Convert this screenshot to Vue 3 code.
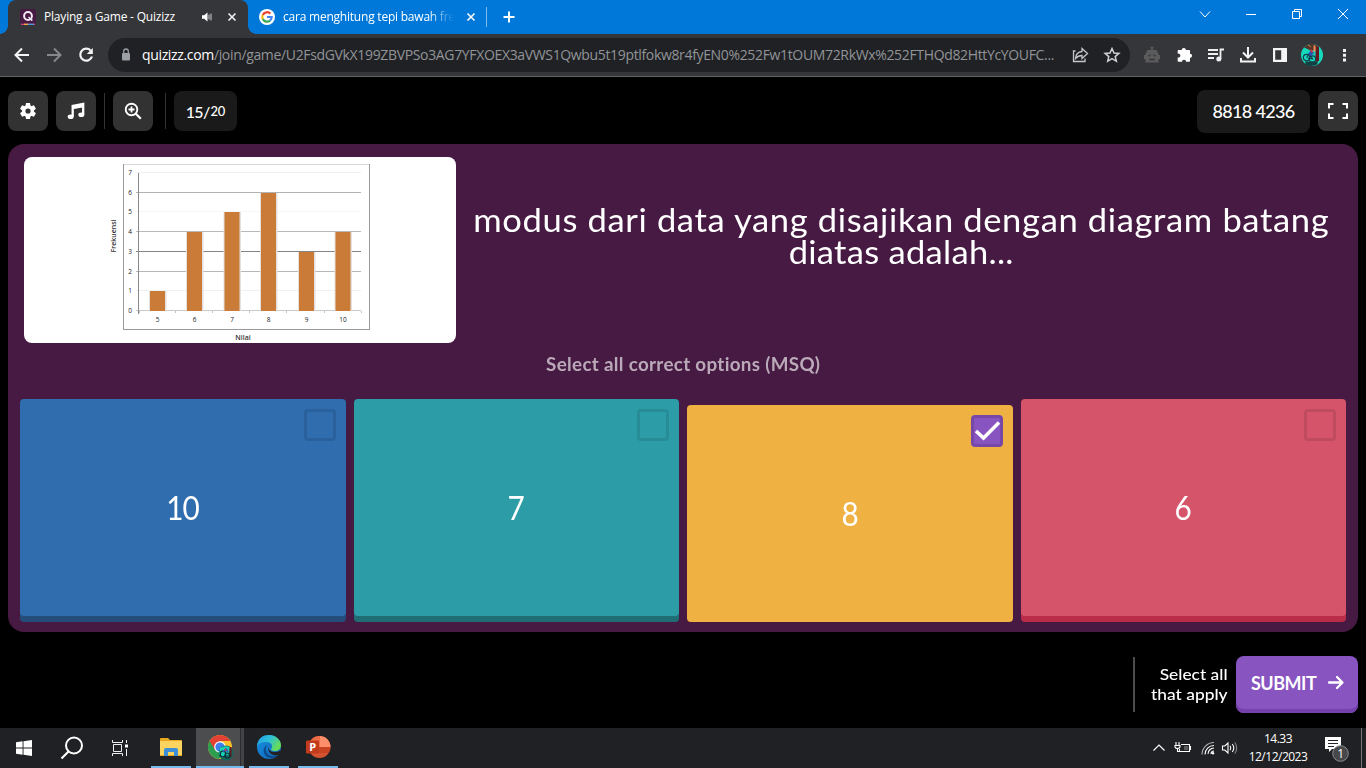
<script setup>
const answers = [
  { label: '10', color: 'blue', picked: false },
  { label: '7', color: 'teal', picked: false },
  { label: '8', color: 'yellow', picked: true },
  { label: '6', color: 'red', picked: false },
]

const bars = [
  { name: '5', x: 126, value: 1 },
  { name: '6', x: 163, value: 4 },
  { name: '7', x: 200.5, value: 5 },
  { name: '8', x: 237, value: 6 },
  { name: '9', x: 275, value: 3 },
  { name: '10', x: 311.5, value: 4 },
]
const gridTone = ['#c9c9c9', '#f0f0f0', '#b7b7b7', '#848484', '#b9b9b9', '#f6f6f6', '#b2b2b2', '#f0f0f0']
const grid = gridTone.map((tone, value) => ({ tone, value, y: 153.5 - Math.round(value * 19.72) }))
const ticks = [115.5, 151.5, 188.5, 225.5, 262.5, 300.5, 337.5]
const topOf = (v) => 154 - Math.round(v * 19.72)
</script>

<template>
  <div class="screen">
    <header class="tabs">
      <div class="tab active">
        <svg class="fav" width="16" height="16" viewBox="0 0 16 16">
          <rect x="0" y="0" width="16" height="15" rx="2.5" fill="#461a42" />
          <path d="M1 15.300h14" stroke="#e8457c" stroke-width="1.2" />
          <path d="M4 15.300h4" stroke="#f5b73e" stroke-width="1.2" />
          <path d="M8 15.300h6" stroke="#3aa0e8" stroke-width="1.2" />
          <circle cx="8" cy="7" r="3.9" fill="none" stroke="#f3e8f4" stroke-width="2" />
          <path d="M8.500 8l2 2" stroke="#f3e8f4" stroke-width="1.500" />
          <circle cx="11.600" cy="11" r="1" fill="#f3e8f4" />
        </svg>
        <span class="title first">Playing a Game - Quizizz</span>
        <svg class="speaker" width="12" height="12" viewBox="0 0 12 12">
          <path d="M1 4.2h2.2L6.5 1.5v9L3.2 7.8H1z" fill="#fff" />
          <path d="M8 3.6v4.8M10 2.6v6.8" stroke="#cfd0d2" fill="none" />
        </svg>
        <svg class="x1" width="10" height="10" viewBox="0 0 10 10"><path d="M1.5 1.5l7 7M8.500 1.5l-7 7" stroke="#f1f1f1" stroke-width="1.6" /></svg>
      </div>
      <div class="tab other">
        <svg width="16" height="16" viewBox="0 0 16 16">
          <circle cx="8" cy="8" r="8" fill="#fff" />
          <g fill="none" stroke-width="2.2">
            <path d="M11.4 4.6A4.7 4.7 0 0 0 3.8 6" stroke="#ea4335" />
            <path d="M3.8 5.900A4.8 4.800 0 0 0 3.8 10.200" stroke="#fbbc05" />
            <path d="M3.8 10.100A4.700 4.700 0 0 0 11 11.600" stroke="#34a853" />
            <path d="M8 8h4.700a4.800 4.800 0 0 1-1.700 3.600" stroke="#4285f4" />
          </g>
        </svg>
        <span class="title second">cara menghitung tepi bawah frek</span>
        <svg class="x2" width="10" height="10" viewBox="0 0 10 10"><path d="M1.500 1.500l7 7M8.500 1.500l-7 7" stroke="#fff" stroke-width="1.600" /></svg>
      </div>
      <i class="tabline"></i>
      <svg class="plus" width="12" height="12" viewBox="0 0 12 12"><path d="M6 .5v11M.5 6h11" stroke="#fff" stroke-width="2" /></svg>
      <div class="wincontrols">
        <svg viewBox="0 0 46 28"><path d="M18 11.500l5 5.500 5-5.500" /></svg>
        <svg viewBox="0 0 46 28"><path d="M18 14.500h10" /></svg>
        <svg viewBox="0 0 46 28"><path d="M18.500 11.500h7v7h-7zM20.500 11.500v-2h7v7h-2" /></svg>
        <svg viewBox="0 0 46 28"><path d="M18 9l10 10M28 9l-10 10" /></svg>
      </div>
    </header>

    <nav class="toolbar">
      <svg class="nav" viewBox="0 0 32 32"><path d="M23 16H10M16 9.500L9.500 16l6.500 6.500" stroke="#f4f4f4" /></svg>
      <svg class="nav" viewBox="0 0 32 32"><path d="M9 16h13M16 9.500l6.500 6.500-6.500 6.500" stroke="#86888b" /></svg>
      <svg class="nav" viewBox="0 0 32 32">
        <path d="M20.600 11.500A6 6 0 1 0 22 17.500" stroke="#f4f4f4" stroke-width="2.200" />
        <path d="M22.800 9v6h-6z" fill="#f4f4f4" />
      </svg>
      <div class="omnibox">
        <svg class="lock" width="10" height="14" viewBox="0 0 10 14">
          <rect x="1" y="5" width="8" height="7.500" rx="1" fill="#9aa0a6" />
          <path d="M2.700 5.500V3.300a2.300 2.300 0 0 1 4.600 0v2.200" stroke="#9aa0a6" stroke-width="1.300" fill="none" />
        </svg>
        <span class="url"><b>quizizz.com</b>/join/game/U2FsdGVkX199ZBVPSo3AG7YFXOEX3aVWS1Qwbu5t19ptlfokw8r4fyEN0%252Fw1tOUM72RkWx%252FTHQd82HttYcYOUFC...</span>
        <svg class="slot" viewBox="0 0 32 32"><path d="M11.500 12H9.500v10.500h11.500v-3M18 9.500l5.500 5-5.500 5v-3c-3 0-4.700 1-6.500 3 .3-4 2.500-6.700 6.500-7z" fill="none" stroke="#c4c6c9" stroke-width="1.300" /></svg>
        <svg class="slot" viewBox="0 0 32 32"><path d="M16 9.500l2 4.500 4.900.4-3.700 3.200 1.200 4.700-4.400-2.600-4.300 2.600 1.100-4.700-3.700-3.200 4.900-.4z" fill="none" stroke="#d0d2d5" stroke-width="1.500" /></svg>
      </div>
      <div class="extensions">
        <svg class="slot" viewBox="0 0 32 32">
          <path d="M9.500 14h13v2H24v4h-1.500v3.500h-13V20H8v-4h1.500z" fill="#5b5b5c" />
          <path d="M11 14q0-2.500 2.500-2.500h5q2.500 0 2.500 2.500M16 12V8.500M14.500 8.500h3" stroke="#5b5b5c" stroke-width="1.500" fill="#5b5b5c" />
          <path d="M12.500 16.500h2M17.500 16.500h2M13 20.500h6" stroke="#35363a" stroke-width="1.500" />
        </svg>
        <svg class="slot" viewBox="0 0 32 32"><path d="M10.500 11h3.200a2.100 2.100 0 1 1 4.200 0h3.300q.8 0 .8.800v3a2 2 0 1 1 0 4.100v3q0 .8-.8.800h-3.100a2 2 0 1 0-4.100 0h-3.500q-.8 0-.8-.8v-3.400a2 2 0 1 0 0-3.800v-2.900q0-.8.800-.8z" fill="#fff" /></svg>
        <svg class="slot" viewBox="0 0 32 32">
          <path d="M8 11h10M8 15h10M8 19h6M20.500 20v-9.500H24" stroke="#f0f0f0" stroke-width="1.800" fill="none" />
          <circle cx="18.800" cy="20" r="2.500" fill="#f0f0f0" />
        </svg>
        <svg class="slot" viewBox="0 0 32 32"><path d="M16 8v10M11 13.500l5 5 5-5M9 19v3.500h14V19" stroke="#f4f4f4" stroke-width="2" fill="none" /></svg>
        <svg class="slot" viewBox="0 0 32 32"><path d="M9 9h14v14H9zM11.200 11.200v9.600h6v-9.600z" fill="#f4f4f4" fill-rule="evenodd" /></svg>
        <svg class="slot" viewBox="0 0 32 32">
          <circle cx="16" cy="16" r="11" fill="#16d8bd" />
          <path d="M8 8.500Q13 3.500 20 5.700l-1 5-4 1-4-2z" fill="#51352b" />
          <path d="M19.500 6q2 0 3.500 2v14l-3.500 1z" fill="#6a1620" />
          <path d="M10 26q5 2 11-.5l1-3H9z" fill="#123f3f" />
          <g fill="none" stroke="#14414c" stroke-width="1.200"><circle cx="10.500" cy="18.500" r="3.200" /><circle cx="16.500" cy="20" r="3.200" /><path d="M10.500 18.500l3-4 3 5.500-5-1" /></g>
          <path d="M12 15l3-4 3 3-3 3z" fill="#274fb4" /><path d="M14.500 10.500l2 3" stroke="#d63340" stroke-width="1.600" />
          <path d="M18.500 6.500v6" stroke="#f08a4e" stroke-width="2" /><path d="M12 6l3 2" stroke="#d87932" />
        </svg>
        <svg class="slot" viewBox="0 0 32 32"><path d="M15 10h3v3h-3zM15 14.800h3v3h-3zM15 19.500h3v3h-3z" fill="#f4f4f4" /></svg>
      </div>
    </nav>

    <main class="game">
      <div class="gamebar">
        <button class="square">
          <svg width="20" height="20" viewBox="0 0 20 20">
            <g fill="#fff"><circle cx="10" cy="10" r="6" /><path d="M8 2h4l.5 3h-5zM8 18h4l.5-3h-5z" /><path d="M8 2h4l.5 3h-5zM8 18h4l.5-3h-5z" transform="rotate(60 10 10)" /><path d="M8 2h4l.5 3h-5zM8 18h4l.5-3h-5z" transform="rotate(120 10 10)" /></g>
            <circle cx="10" cy="10" r="2.600" fill="#323232" />
          </svg>
        </button>
        <button class="square">
          <svg width="20" height="20" viewBox="0 0 20 20">
            <path d="M6.700 15.500V5l10.500-2v10.500M6.700 7l10.500-2" fill="none" stroke="#fff" stroke-width="2.300" />
            <ellipse cx="4.700" cy="15.700" rx="3" ry="2.300" fill="#fff" /><ellipse cx="15.300" cy="13.700" rx="3" ry="2.300" fill="#fff" />
          </svg>
        </button>
        <i class="sep"></i>
        <button class="square">
          <svg width="20" height="20" viewBox="0 0 20 20"><circle cx="8.500" cy="8.500" r="5.800" fill="none" stroke="#fff" stroke-width="1.900" /><path d="M12.800 12.800l5 5" stroke="#fff" stroke-width="2.300" /><path d="M8.500 5.500v6M5.500 8.500h6" stroke="#fff" stroke-width="1.800" /></svg>
        </button>
        <i class="sep second-sep"></i>
        <div class="progress"><span>15/</span><small>20</small></div>
        <div class="room"><span>8818 4236</span></div>
        <button class="square">
          <svg width="22" height="18" viewBox="0 0 22 18"><path d="M2 6.500V2h4.500M15.500 2H20v4.500M20 11.500V16h-4.500M6.500 16H2v-4.500" fill="none" stroke="#fff" stroke-width="2" /></svg>
        </button>
      </div>

      <section class="panel">
        <div class="question">
          <div class="picture">
            <svg width="432" height="186" viewBox="0 0 432 186">
              <rect x="99.500" y="7.500" width="246" height="165" fill="#fff" stroke="#999" />
              <path d="M100 7.500h245" stroke="#d8d8d8" />
              <g v-for="g in grid" :key="g.value">
                <path :d="`M112 ${g.y}H337`" :stroke="g.tone" />
                <text x="106" :y="g.y + 2.300" class="tick">{{ g.value }}</text>
              </g>
              <path d="M114.500 16v141" stroke="#898989" />
              <path v-for="t in ticks" :key="t" :d="`M${t} 154v2`" stroke="#c4c4c4" />
              <g v-for="b in bars" :key="b.name">
                <rect :x="b.x - 1" :y="topOf(b.value)" width="17.500" :height="154 - topOf(b.value)" fill="#e5e0dc" />
                <rect :x="b.x" :y="topOf(b.value)" width="15" :height="154 - topOf(b.value)" fill="#cb7b38" />
                <text :x="b.x + 7.500" y="165.300" class="tick">{{ b.name }}</text>
              </g>
              <text x="219" y="182.500" class="axis">Nilai</text>
              <text transform="translate(91.500 79) rotate(-90)" class="axis freq">Frekuensi</text>
            </svg>
          </div>
          <h1><span class="l1">modus dari data yang disajikan dengan diagram batang</span><span class="l2">diatas adalah...</span></h1>
        </div>
        <p class="hint"><span>Select all correct options (MSQ)</span></p>
        <div class="answers">
          <div v-for="a in answers" :key="a.label" class="answer" :class="[a.color, { picked: a.picked }]">
            <div class="check">
              <svg v-if="a.picked" width="32" height="32" viewBox="0 0 32 32"><path d="M5 16l7.500 7L28 7.500" fill="none" stroke="#fff" stroke-width="3.500" /></svg>
            </div>
            <span>{{ a.label }}</span>
          </div>
        </div>
      </section>

      <footer class="actions">
        <div class="note"><span>Select all</span><span>that apply</span></div>
        <button class="submit"><span>SUBMIT</span>
          <svg width="18" height="16" viewBox="0 0 18 16"><path d="M2 7.500h13M10 2l5.500 5.500L10 13" fill="none" stroke="#fff" stroke-width="2.300" stroke-linecap="round" stroke-linejoin="round" /></svg>
        </button>
      </footer>
    </main>

    <div class="taskbar">
      <div class="launch"><svg width="16" height="16" viewBox="0 0 16 16"><path d="M0 2.300L6.600 1.300v6.200H0zM7.500 1.200L16 0v7.500H7.500zM0 8.400h6.600v6.300L0 13.800zM7.500 8.400H16V16l-8.500-1.200z" fill="#fff" /></svg></div>
      <div class="launch"><svg width="24" height="24" viewBox="0 0 24 24"><circle cx="14" cy="9.500" r="8" fill="none" stroke="#fff" stroke-width="2" /><path d="M8.500 15.500L1.500 22.500" stroke="#fff" stroke-width="2.200" /></svg></div>
      <div class="launch"><svg width="16" height="16" viewBox="0 0 16 16"><path d="M.5 0v2.500h10V0M.5 16v-2.500h10V16M1.500 4.500h8v7h-8zM14.500 0v3M14.500 9v7" fill="none" stroke="#eee" /><path d="M13 4.500h3v3h-3z" fill="#fff" /></svg></div>
      <div class="app explorer"><svg width="24" height="24" viewBox="0 0 24 24">
        <path d="M1 4q0-1 1-1h7l2 2h11q1 0 1 1v15H1z" fill="#e9a820" /><path d="M1 6h22v14H1z" fill="#fbd45f" /><path d="M5 21v-6q0-2 2-2h10q2 0 2 2v6h-4v-4H9v4z" fill="#3d8ed6" />
      </svg></div>
      <div class="app chrome"><svg width="28" height="28" viewBox="0 0 28 28">
        <circle cx="14" cy="14" r="12" fill="#f9c22c" />
        <path d="M3.600 8A12 12 0 0 0 13 26l5-8-4-4z" fill="#2d9d4f" />
        <path d="M14 8h10.400A12 12 0 0 0 3.600 8L9 17z" fill="#e24134" />
        <circle cx="14" cy="14" r="5.800" fill="#fff" /><circle cx="14" cy="14" r="4.600" fill="#3f7eed" />
        <circle cx="20" cy="20" r="7.500" fill="#12665a" /><path d="M14 15q5-3 10-1l-1 7-7 4-3-4z" fill="#18d3b3" /><path d="M24.500 14v10" stroke="#6a1620" stroke-width="2" fill="none" />
        <g stroke="#102f39" fill="none" stroke-width="1.200"><circle cx="17" cy="21" r="2.800" /><circle cx="21.500" cy="22.500" r="2.500" /></g>
        <path d="M17 19l3-3 2 3" stroke="#305bc1" stroke-width="1.700" fill="none" /><path d="M19 16l1 2" stroke="#d63340" stroke-width="1.500" />
      </svg></div>
      <div class="app edge"><svg width="26" height="26" viewBox="0 0 26 26">
        <defs>
          <linearGradient id="edgeTop" x1="0" y1="0" x2="1" y2=".5"><stop stop-color="#2399df" /><stop offset=".5" stop-color="#2bbfdc" /><stop offset="1" stop-color="#66dc56" /></linearGradient>
          <linearGradient id="edgeLow" x1="0" y1="0" x2="1" y2="1"><stop stop-color="#1490df" /><stop offset="1" stop-color="#1464b8" /></linearGradient>
        </defs>
        <circle cx="13" cy="13" r="12" fill="url(#edgeLow)" />
        <path d="M1 12C2 4 7 1 13 1c7 0 12 5 12 10 0 4-3 6-6 6-3 0-4-1-4-2 1-1 1-2 1-3 0-3-3-4-6-4-4 0-7 1-9 4z" fill="url(#edgeTop)" />
        <path d="M11 11c-3 5 0 11 6 11 3 0 5-1 6-2-4 6-13 5-15-1-1-4 1-7 3-8z" fill="#0e4b8c" />
        <path d="M12.500 11c-1 2 0 5.500 3 6.500 3 1 6 .7 8.500-.7l1.500 1.500q-1.500 2-3 2.500c-4 1.300-8 0-9.500-3-1.200-2-1.300-5-.5-6.800z" fill="#202124" />
      </svg></div>
      <div class="app ppt"><svg width="26" height="24" viewBox="0 0 26 24">
        <circle cx="14.500" cy="12" r="11" fill="#d35230" /><path d="M14.500 1a11 11 0 0 1 11 11h-11z" fill="#ff8f6b" /><path d="M3.500 12h22a11 11 0 0 1-2 6H5z" fill="#c43e1c" opacity=".7" /><path d="M14.500 1v11H3.500a11 11 0 0 1 11-11z" fill="#ed6c47" />
        <rect x="1" y="5.500" width="13" height="13" rx="1" fill="#c33b1d" /><text x="4.200" y="16" class="pp">P</text>
      </svg></div>
      <div class="tray">
        <svg width="14" height="10" viewBox="0 0 14 10"><path d="M1.500 7.500L7 2l5.500 5.500" fill="none" stroke="#fff" stroke-width="1.200" /></svg>
        <svg class="battery" width="18" height="14" viewBox="0 0 18 14"><path d="M7 3.500h8.500v7H5.500V8M15.500 5.500h1v3h-1M2 1v3M5 1v3M1 4.500h5v1.500q-.5 1.500-2.500 1.500T1 6zM3.500 7.500v3h2" fill="none" stroke="#fff" stroke-width="1.100" /><path d="M10 5h4v4h-4z" fill="#ddd" opacity=".3" /></svg>
        <svg class="wifi" width="14" height="14" viewBox="0 0 14 14"><g fill="none" stroke="#fff" stroke-width="1.100"><path d="M10 13a3 3 0 0 1 3-3" /><path d="M7 13a6 6 0 0 1 6-6" /><path d="M4 13.500a9 9 0 0 1 9-9" /><path d="M1 13.500a12 12 0 0 1 12-12" opacity=".65" /></g><circle cx="12" cy="12.300" r="1.200" fill="#fff" /></svg>
        <svg class="volume" width="18" height="14" viewBox="0 0 18 14"><g fill="none" stroke="#fff" stroke-width="1.100"><path d="M1.500 5h2.300L7 2v10L3.800 9H1.500z" /><path d="M9 4.800q1.600 2.200 0 4.400M11.300 3q3 4 0 8" /><path d="M13.700 1.300q4 5.700 0 11.400" opacity=".45" /></g></svg>
      </div>
      <div class="clock"><span>14.33</span><span class="date">12/12/2023</span></div>
      <div class="notice"><svg width="28" height="30" viewBox="0 0 28 30"><path d="M2 4h16v12H9l-3 3v-3H2z" fill="#fff" /><path d="M5 7.500h10M5 10.500h10M5 13.500h6" stroke="#222427" /><circle cx="17.500" cy="20.500" r="7.800" fill="#46484a" stroke="#8b8c8d" /><text x="14.200" y="25" class="count">1</text></svg></div>
      <i class="peek"></i>
    </div>
  </div>
</template>

<style>
body { background: #000; }
</style>

<style scoped>
* { box-sizing: border-box; }
.screen { width: 1366px; height: 768px; overflow: hidden; display: flex; flex-direction: column; background: #000; color: #fff; font-family: "Open Sans", "Noto Sans", sans-serif; }
svg { display: block; flex: none; }
span { white-space: nowrap; }
button { border: 0; padding: 0; color: #fff; font: inherit; }

.tabs { height: 34px; flex: none; display: flex; align-items: center; background: #0078d9; }
.tab { display: flex; align-items: center; height: 34px; }
.active { position: relative; width: 240px; margin-left: 8px; padding-left: 12px; background: #35363a; border-radius: 8px 8px 0 0; }
.active::before, .active::after { content: ""; position: absolute; bottom: 0; width: 8px; height: 8px; }
.active::before { left: -8px; background: radial-gradient(circle at 0 0, transparent 7.500px, #35363a 8px); }
.active::after { right: -8px; background: radial-gradient(circle at 100% 0, transparent 7.500px, #35363a 8px); }
.title { font-size: 12px; line-height: 18px; }
.title.first { margin-left: 8px; width: 157px; letter-spacing: -0.200px; }
.x1 { margin-left: 14px; }
.other { padding-left: 11px; }
.title.second { margin-left: 8px; width: 178px; letter-spacing: -0.220px; -webkit-mask-image: linear-gradient(90deg, #000 145px, transparent 171px); mask-image: linear-gradient(90deg, #000 145px, transparent 171px); }
.x2 { margin-left: 5px; }
.tabline { width: 1px; height: 20px; margin-left: 10px; background: #83bdea; }
.plus { margin-left: 16px; }
.wincontrols { display: flex; margin-left: auto; align-self: flex-start; }
.wincontrols svg { width: 46px; height: 28px; fill: none; stroke: #fff; }

.toolbar { height: 43px; flex: none; display: flex; align-items: center; padding-left: 6px; background: #35363a; border-bottom: 1px solid #626367; }
.nav { width: 32px; height: 32px; fill: none; stroke-width: 2; }
.omnibox { width: 1022px; height: 34px; margin-left: 6px; display: flex; align-items: center; padding: 0 2px 0 13px; background: #202124; border-radius: 17px; }
.url { width: 923px; margin-left: 11px; font-size: 14px; line-height: 20px; letter-spacing: -0.345px; color: #919498; }
.url b { color: #fff; font-weight: 400; }
.slot { width: 32px; height: 32px; }
.extensions { display: flex; margin-left: 6px; }

.game { height: 651px; flex: none; display: flex; flex-direction: column; font-family: Lato, "Noto Sans", sans-serif; }
.gamebar { height: 67px; flex: none; display: flex; align-items: center; padding: 1px 8px 0; }
.square { width: 40px; height: 40px; border-radius: 8px; background: #323232; display: flex; align-items: center; justify-content: center; }
.square + .square { margin-left: 8px; }
.sep { width: 1px; height: 36px; margin: 0 8px; background: #333; }
.second-sep { margin-left: 12px; }
.progress { width: 63px; height: 40px; display: flex; align-items: center; justify-content: center; border-radius: 8px; background: #1a1a1a; font-size: 16px; font-weight: 500; letter-spacing: -0.700px; }
.progress small { font-size: 13px; margin-left: 1px; letter-spacing: -0.200px; }
.room { width: 113px; height: 43px; margin: 0 8px 0 auto; border-radius: 8px; background: #1a1a1a; font-size: 18px; font-weight: 500; letter-spacing: -0.700px; display: flex; align-items: center; justify-content: center; }

.panel { height: 488px; margin: 0 8px; flex: none; border-radius: 16px; background: #461a42; display: flex; flex-direction: column; padding: 13px 12px 10px; }
.question { height: 186px; display: flex; }
.picture { width: 432px; height: 186px; margin-left: 4px; flex: none; background: #fff; border-radius: 8px; overflow: hidden; }
.tick { font: 6.500px "Open Sans", sans-serif; fill: #222; text-anchor: middle; }
.axis { font: 600 7px "Open Sans", sans-serif; fill: #333; text-anchor: middle; }
h1 { flex: 1; margin: 0; padding-top: 47px; display: flex; flex-direction: column; align-items: center; font-size: 32px; line-height: 32px; font-weight: 400; }
h1 span { transform: scaleX(1.08); height: 32px; }
.l1 { letter-spacing: 0.580px; }
.l2 { letter-spacing: 0.250px; }
.hint { margin: 10px 0 0; height: 22px; line-height: 22px; text-align: center; font-size: 18px; font-weight: 700; letter-spacing: 0.300px; color: #baaab9; }
.hint span { display: inline-block; transform: scaleX(1.045); }
.answers { margin-top: 24px; height: 223px; display: grid; grid-template-columns: repeat(4, 1fr); gap: 8px; }
.answer { position: relative; display: flex; align-items: center; justify-content: center; border-radius: 4px; height: 217px; font-size: 32px; }
.answer span { transform: scaleX(.93); letter-spacing: -1px; }
.blue { background: #2f6daf; box-shadow: 0 6px #244d7b; }
.teal { background: #2c9ca6; box-shadow: 0 6px #206d75; }
.yellow { background: #efb242; }
.red { background: #d5546a; box-shadow: 0 6px #b92d48; }
.answer.picked { margin-top: 6px; }
.check { position: absolute; top: 10px; right: 10px; width: 32px; height: 32px; border: 3px solid rgba(0, 0, 0, .1); border-radius: 4px; }
.picked .check { background: #8854c0; border-color: #7848a9; }
.check svg { margin: -3px; }

.actions { height: 96px; display: flex; justify-content: flex-end; padding: 24px 8px 0; }
.note { width: 95px; height: 55px; margin: 1px 8px 0 0; padding-bottom: 2px; border-left: 2px solid #4d4d4d; display: flex; flex-direction: column; align-items: flex-end; justify-content: center; font-size: 16px; line-height: 20px; font-weight: 500; }
.note span { transform: scaleX(1.085); transform-origin: right; }
.submit { width: 122px; height: 57px; border-radius: 8px; background: #8854c0; box-shadow: inset 0 -4px #7541ac; display: flex; align-items: center; padding: 0 13px 3px 15px; font-size: 18px; font-weight: 700; letter-spacing: -0.500px; }
.submit svg { margin-left: auto; }

.taskbar { height: 40px; flex: none; display: flex; background: #202124; }
.launch { width: 48px; display: flex; align-items: center; justify-content: center; }
.app { width: 40px; display: flex; align-items: center; justify-content: center; border-bottom: 2px solid #76b9ed; }
.explorer { margin-left: 7px; }
.chrome { width: 48px; margin: 0 5px; background: linear-gradient(90deg, #4b4d4e 44px, #2b2c2d 44px, #2b2c2d 45px, #414344 45px); }
.ppt { margin-left: 9px; }
.pp { font: 700 11px "Open Sans", sans-serif; fill: #fff; }
.tray { margin-left: auto; display: flex; align-items: center; }
.battery { margin-left: 8px; }
.wifi { margin-left: 9px; }
.volume { margin-left: 6px; }
.clock { width: 70px; margin-left: 4px; display: flex; flex-direction: column; align-items: center; padding-top: 2px; font-size: 12px; line-height: 18px; letter-spacing: -0.500px; }
.notice { width: 48px; display: flex; align-items: center; padding: 0 0 0 10px; }
.count { font: 12px "Open Sans", sans-serif; fill: #fff; }
.peek { width: 1px; margin-right: 4px; background: #777; }
</style>
